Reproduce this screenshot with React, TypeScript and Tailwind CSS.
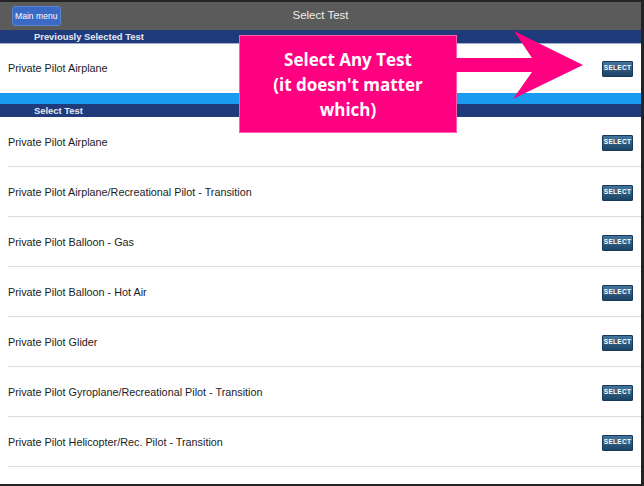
import React from "react";

const tests = [
    "Private Pilot Airplane",
    "Private Pilot Airplane/Recreational Pilot - Transition",
    "Private Pilot Balloon - Gas",
    "Private Pilot Balloon - Hot Air",
    "Private Pilot Glider",
    "Private Pilot Gyroplane/Recreational Pilot - Transition",
    "Private Pilot Helicopter/Rec. Pilot - Transition",
];

function SelectButton() {
    return (
        <button className="w-[31px] h-[16px] shrink-0 rounded-[1px] border border-[#17395a] bg-gradient-to-b from-[#44749b] to-[#1b4466] text-white text-[6.5px] font-bold tracking-[0.3px] leading-none">
            SELECT
        </button>
    );
}

function SectionHeader({ title }: { title: string }) {
    return (
        <div className="h-[13px] shrink-0 bg-[#1f3b7b] flex items-center pl-[34px] text-[9.4px] font-bold text-[#e4e9f3] leading-none">
            {title}
        </div>
    );
}

function TestRow({ name }: { name: string }) {
    return (
        <div className="h-[50px] shrink-0 flex flex-col">
            <div className="flex-1 flex items-center justify-between pl-[8px] pr-[8px] pt-[2px]">
                <span className="text-[10.8px] text-[#1c1c1c]">{name}</span>
                <SelectButton />
            </div>
            <div className="ml-[8px] h-px bg-[#dcdcdc]" />
        </div>
    );
}

export default function App() {
    return (
        <div
            className="w-[644px] h-[486px] bg-[#232323] pt-[2px] pb-[2px] pr-[3px] overflow-hidden relative"
            style={{ fontFamily: '"Liberation Sans", Arial, sans-serif' }}
        >
            <div className="h-full bg-white flex flex-col overflow-hidden">
                {/* Top bar */}
                <div className="h-[28px] shrink-0 bg-[#5b5b5b] relative flex items-center justify-center">
                    <button className="absolute left-[12px] top-[4px] h-[20px] px-[2px] rounded-[3px] bg-[#3b69c3] border border-[#5a84d2] text-white text-[8.6px] leading-none">
                        Main menu
                    </button>
                    <span className="text-[11.5px] text-[#eeeeee]">Select Test</span>
                </div>

                <SectionHeader title="Previously Selected Test" />
                <div className="h-px shrink-0 bg-[#9fb0cf]" />
                <div className="h-[49px] shrink-0 flex items-center justify-between pl-[8px] pr-[8px]">
                    <span className="text-[10.8px] text-[#1c1c1c]">Private Pilot Airplane</span>
                    <SelectButton />
                </div>
                <div className="h-[11px] shrink-0 bg-[#1a9bef]" />
                <SectionHeader title="Select Test" />

                <div className="flex flex-col shrink-0">
                    {tests.map((t) => (
                        <TestRow key={t} name={t} />
                    ))}
                </div>
            </div>

            {/* Callout overlay */}
            <div className="absolute left-[239px] top-[35px] w-[218px] h-[98px] bg-[#ff0080] border border-[#ff5fae] flex flex-col items-center justify-center text-white font-bold text-[17px] leading-[25px] text-center"
                style={{ fontFamily: '"Open Sans", sans-serif' }}
            >
                <span>Select Any Test</span>
                <span>(it doesn't matter</span>
                <span>which)</span>
            </div>
            <svg className="absolute left-0 top-0" width="644" height="486" viewBox="0 0 644 486">
                <polygon
                    points="456,58 532,58 514,31 583,65 513,99 532,72 456,72"
                    fill="#ff0080"
                />
            </svg>
        </div>
    );
}
